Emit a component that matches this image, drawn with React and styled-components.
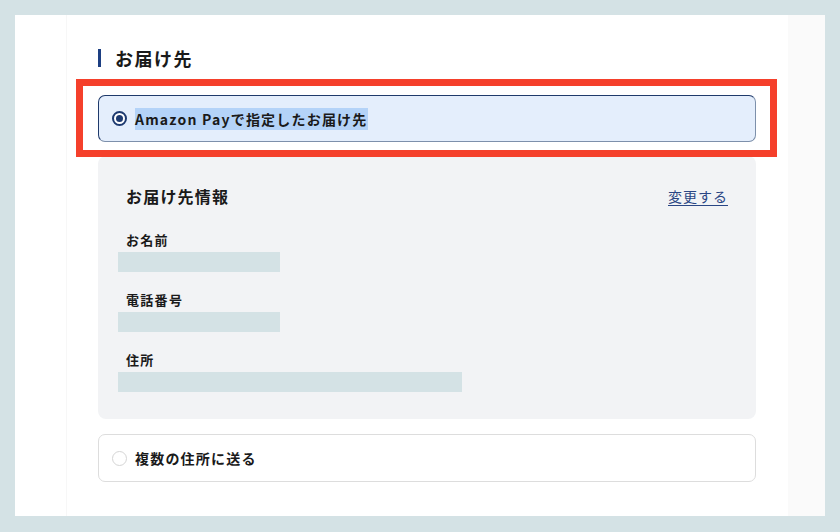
import React from 'react';
import styled, { createGlobalStyle } from 'styled-components';

const FIELDS = [
  { label: 'お名前', width: 162 },
  { label: '電話番号', width: 162 },
  { label: '住所', width: 344 },
];

function App() {
  return (
    <Page.Wrapper>
      <GlobalStyle />
      <Page.Frame>
        <Page.Column>
          <Heading.Wrapper>
            <Heading.Bar />
            <Heading.Text>お届け先</Heading.Text>
          </Heading.Wrapper>

          <Option.Card selected>
            <Option.Radio selected />
            <Option.Label>
              <Option.Selection>Amazon Payで指定したお届け先</Option.Selection>
            </Option.Label>
            <Highlight />
          </Option.Card>

          <Info.Panel>
            <Info.Header>
              <Info.Title>お届け先情報</Info.Title>
              <Info.Link href="#">変更する</Info.Link>
            </Info.Header>
            <Info.Fields>
              {FIELDS.map((field) => (
                <Info.Field key={field.label}>
                  <Info.Label>{field.label}</Info.Label>
                  <Info.Placeholder style={{ width: field.width }} />
                </Info.Field>
              ))}
            </Info.Fields>
          </Info.Panel>

          <Option.Card>
            <Option.Radio />
            <Option.Label>複数の住所に送る</Option.Label>
          </Option.Card>
        </Page.Column>
        <Page.Aside />
      </Page.Frame>
    </Page.Wrapper>
  );
}

const GlobalStyle = createGlobalStyle`
  *,
  *::before,
  *::after {
    box-sizing: border-box;
    margin: 0;
    padding: 0;
  }

  body {
    font-family: "Noto Sans CJK JP", "Noto Sans", sans-serif;
    color: #1a1a1a;
  }
`;

const Page = {
  Wrapper: styled.main`
    width: 840px;
    height: 532px;
    background-color: #d4e2e5;
    padding: 15px 15px 16px;
    display: flex;
  `,
  Frame: styled.div`
    flex: 1;
    background-color: #ffffff;
    display: flex;
    padding-left: 51px;
  `,
  Column: styled.section`
    width: 722px;
    padding: 30px 32px 0 31px;
    display: flex;
    flex-direction: column;
    border-left: 1px solid #f7f7f7;
  `,
  Aside: styled.div`
    flex: 1;
    background-color: #fafafa;
  `,
};

const Heading = {
  Wrapper: styled.h2`
    display: flex;
    align-items: center;
    height: 26px;
    margin-bottom: 24px;
  `,
  Bar: styled.span`
    width: 3px;
    height: 18px;
    background-color: #1d3f82;
    margin-right: 14px;
  `,
  Text: styled.span`
    font-size: 18px;
    font-weight: 700;
    letter-spacing: 1.5px;
    line-height: 26px;
  `,
};

const Option = {
  Card: styled.div`
    position: relative;
    display: flex;
    align-items: center;
    height: ${({ selected }) => (selected ? '47px' : '48px')};
    padding-left: 13px;
    border: 1px solid;
    border-color: ${({ selected }) =>
      selected ? '#1f3a6b #7d90ab #7d90ab #1f3a6b' : '#dddddd'};
    border-radius: 7px;
    background-color: ${({ selected }) => (selected ? '#e4eefc' : '#ffffff')};
    margin-top: ${({ selected }) => (selected ? '0' : '15px')};
  `,
  Radio: styled.span`
    width: 15px;
    height: 15px;
    border-radius: 50%;
    border: ${({ selected }) => (selected ? '2px solid #1d3a70' : '1.5px solid #d5d5d5')};
    background-color: #ffffff;
    display: flex;
    align-items: center;
    justify-content: center;
    margin-right: 8px;

    &::after {
      content: "";
      display: ${({ selected }) => (selected ? 'block' : 'none')};
      width: 7px;
      height: 7px;
      border-radius: 50%;
      background-color: #1d3a70;
    }
  `,
  Label: styled.span`
    font-size: 14px;
    font-weight: 700;
    letter-spacing: 1.2px;
    line-height: 20px;
  `,
  Selection: styled.span`
    background-color: #b4d3f8;
    padding: 1px 0;
  `,
};

const Highlight = styled.span`
  position: absolute;
  top: -17px;
  left: -23px;
  right: -22px;
  bottom: -16px;
  border: 7px solid #f5402b;
  pointer-events: none;
`;

const Info = {
  Panel: styled.div`
    margin-top: 14px;
    background-color: #f2f3f5;
    border-radius: 8px;
    padding: 28px 28px 27px 20px;
  `,
  Header: styled.div`
    display: flex;
    align-items: center;
    justify-content: space-between;
    padding-left: 8px;
    height: 24px;
  `,
  Title: styled.h3`
    font-size: 16px;
    font-weight: 700;
    letter-spacing: 1.2px;
    line-height: 24px;
  `,
  Link: styled.a`
    font-size: 14px;
    color: #2a4684;
    letter-spacing: 1px;
    text-decoration: underline;
    text-underline-offset: 3px;
  `,
  Fields: styled.div`
    display: flex;
    flex-direction: column;
    gap: 19px;
    margin-top: 23px;
  `,
  Field: styled.div`
    display: flex;
    flex-direction: column;
    align-items: flex-start;
  `,
  Label: styled.span`
    font-size: 13px;
    font-weight: 700;
    letter-spacing: 1.3px;
    line-height: 18px;
    padding-left: 8px;
  `,
  Placeholder: styled.div`
    height: 20px;
    margin-top: 3px;
    background-color: #d4e2e5;
  `,
};

export default App;
